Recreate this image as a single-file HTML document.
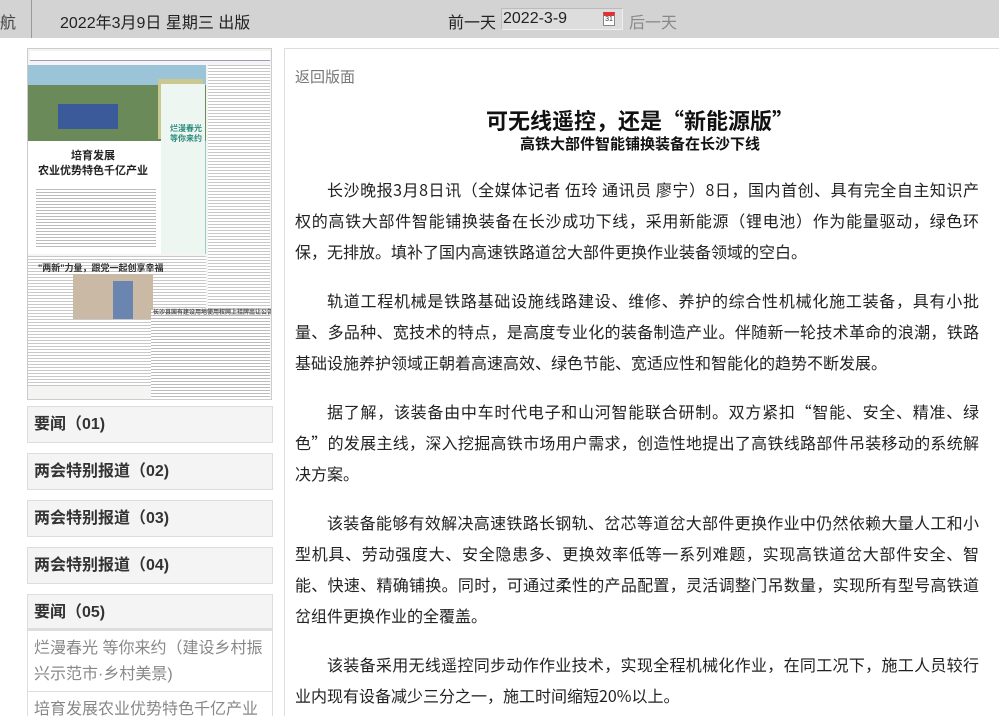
<!DOCTYPE html>
<html><head><meta charset="utf-8"><style>
*{margin:0;padding:0;box-sizing:border-box}
html,body{width:999px;height:716px;overflow:hidden}
body{background:#fff;font-family:"Liberation Sans","Noto Sans CJK SC",sans-serif;color:#222;position:relative}
.top{position:absolute;left:0;top:0;width:999px;height:38px;background:#d3d3d3;font-size:16px}
.top span{position:absolute;top:9px}
.sep{position:absolute;left:31px;top:0;width:1px;height:38px;background:#999}
.date{position:absolute;left:501px;top:8px;width:122px;height:22px;background:#ddd;border:1px solid #bbb;border-right-color:#eee;border-bottom-color:#eee;font-size:16px;padding-left:1px;line-height:20px}
.cal{position:absolute;left:101px;top:3px;width:12px;height:14px;background:#fff;border:1px solid #888;border-top:4px solid #d33;font-size:7px;line-height:8px;text-align:center;color:#333}
.thumb{position:absolute;left:27px;top:48px;width:245px;height:352px;border:1px solid #ccc;background:#f4f4f2;overflow:hidden}
.thumb div{position:absolute}
.menu{position:absolute;left:27px;width:246px;height:37px;background:#f4f4f4;border:1px solid #ddd;font-weight:bold;font-size:16px;line-height:35px;padding-left:6px;color:#333}
.link{position:absolute;left:27px;width:246px;border:1px solid #ddd;border-top:none;font-size:16px;line-height:26px;color:#888;padding:5px 6px;overflow:hidden}
.main{position:absolute;left:284px;top:48px;width:715px;height:668px;border:1px solid #ddd;border-bottom:none;border-right:none;overflow:hidden}
.back{position:absolute;left:10px;top:17px;font-size:15px;color:#777}
h1{position:absolute;left:0;width:710px;top:56px;text-align:center;font-size:22px;font-weight:bold;color:#111;font-family:"Noto Sans CJK SC",sans-serif;line-height:30px}
h2{position:absolute;left:0;width:710px;top:85px;text-align:center;font-size:15px;font-weight:bold;color:#111;font-family:"Noto Sans CJK SC",sans-serif;line-height:20px}
.body{position:absolute;left:10px;top:125px;width:684px;font-size:16px;line-height:31px;color:#222;font-family:"Noto Sans CJK SC",sans-serif}
.body p{text-indent:2em;text-align:justify;margin-bottom:18px}
.l1{display:block;text-align-last:justify}
.l2{display:block;text-indent:0}
</style></head><body>
<div class="top">
<span style="left:0;color:#444">航</span><div class="sep"></div>
<span style="left:60px">2022年3月9日 星期三 出版</span>
<span style="left:448px">前一天</span>
<div class="date">2022-3-9<div class="cal">31</div></div>
<span style="left:629px;color:#888">后一天</span>
</div>
<div class="thumb">
<div style="left:2px;top:2px;width:240px;height:10px;background:#fff;border-bottom:1px solid #99c"></div>
<div style="left:0;top:16px;width:178px;height:76px;background:#6a8a5a"></div>
<div style="left:0;top:16px;width:178px;height:20px;background:#9cc4d8"></div>
<div style="left:30px;top:55px;width:60px;height:25px;background:#3a5a9a"></div>
<div style="left:130px;top:30px;width:45px;height:60px;background:#c8c890"></div>
<div style="left:0;top:92px;width:178px;height:113px;background:#fff;border-right:2px solid #9cc"></div>
<div style="left:0;top:100px;font-size:11px;font-weight:bold;color:#222;line-height:15px;text-align:center;width:130px">培育发展<br>农业优势特色千亿产业</div>
<div style="left:8px;top:140px;width:120px;height:60px;background:repeating-linear-gradient(#bbb 0 1px,#fff 1px 3px)"></div>
<div style="left:133px;top:35px;width:44px;height:170px;background:#eef6f2"></div>
<div style="left:142px;top:75px;font-size:8px;color:#2a8a7a;font-weight:bold;line-height:10px">烂漫春光<br>等你来约</div>
<div style="left:180px;top:16px;width:62px;height:320px;background:repeating-linear-gradient(#c8c8c8 0 1px,#fff 1px 3px)"></div>
<div style="left:0;top:207px;width:178px;height:130px;background:repeating-linear-gradient(#c8c8c8 0 1px,#fff 1px 3px)"></div>
<div style="left:10px;top:212px;font-size:9px;font-weight:bold;color:#333">"两新"力量，跟党一起创享幸福</div>
<div style="left:45px;top:225px;width:80px;height:45px;background:#c9b9a5"></div>
<div style="left:85px;top:232px;width:20px;height:38px;background:#6a86b0"></div>
<div style="left:123px;top:260px;width:119px;height:90px;background:repeating-linear-gradient(#bbb 0 1px,#fff 1px 3px)"></div>
<div style="left:125px;top:258px;font-size:6px;font-weight:bold;color:#555;white-space:nowrap">长沙县国有建设用地使用权网上挂牌出让公告</div>
</div>
<div class="menu" style="top:406px">要闻（01)</div>
<div class="menu" style="top:453px">两会特别报道（02)</div>
<div class="menu" style="top:500px">两会特别报道（03)</div>
<div class="menu" style="top:547px">两会特别报道（04)</div>
<div class="menu" style="top:594px;height:37px;border-bottom:3px solid #ddd">要闻（05)</div>
<div class="link" style="top:631px;height:61px">烂漫春光 等你来约（建设乡村振兴示范市·乡村美景)</div>
<div class="link" style="top:692px;height:24px;border-bottom:none">培育发展农业优势特色千亿产业</div>
<div class="main">
<div class="back">返回版面</div>
<h1>可无线遥控，还是“新能源版”</h1>
<h2>高铁大部件智能铺换装备在长沙下线</h2>
<div class="body">
<p><span class="l1">长沙晚报3月8日讯（全媒体记者 伍玲 通讯员 廖宁）8日，国内首创、具有完全自主知识产</span><span class="l2">权的高铁大部件智能铺换装备在长沙成功下线，采用新能源（锂电池）作为能量驱动，绿色环保，无排放。填补了国内高速铁路道岔大部件更换作业装备领域的空白。</span></p>
<p>轨道工程机械是铁路基础设施线路建设、维修、养护的综合性机械化施工装备，具有小批量、多品种、宽技术的特点，是高度专业化的装备制造产业。伴随新一轮技术革命的浪潮，铁路基础设施养护领域正朝着高速高效、绿色节能、宽适应性和智能化的趋势不断发展。</p>
<p>据了解，该装备由中车时代电子和山河智能联合研制。双方紧扣“智能、安全、精准、绿色”的发展主线，深入挖掘高铁市场用户需求，创造性地提出了高铁线路部件吊装移动的系统解决方案。</p>
<p>该装备能够有效解决高速铁路长钢轨、岔芯等道岔大部件更换作业中仍然依赖大量人工和小型机具、劳动强度大、安全隐患多、更换效率低等一系列难题，实现高铁道岔大部件安全、智能、快速、精确铺换。同时，可通过柔性的产品配置，灵活调整门吊数量，实现所有型号高铁道岔组件更换作业的全覆盖。</p>
<p>该装备采用无线遥控同步动作作业技术，实现全程机械化作业，在同工况下，施工人员较行业内现有设备减少三分之一，施工时间缩短20%以上。</p>
</div>
</div>
</body></html>
